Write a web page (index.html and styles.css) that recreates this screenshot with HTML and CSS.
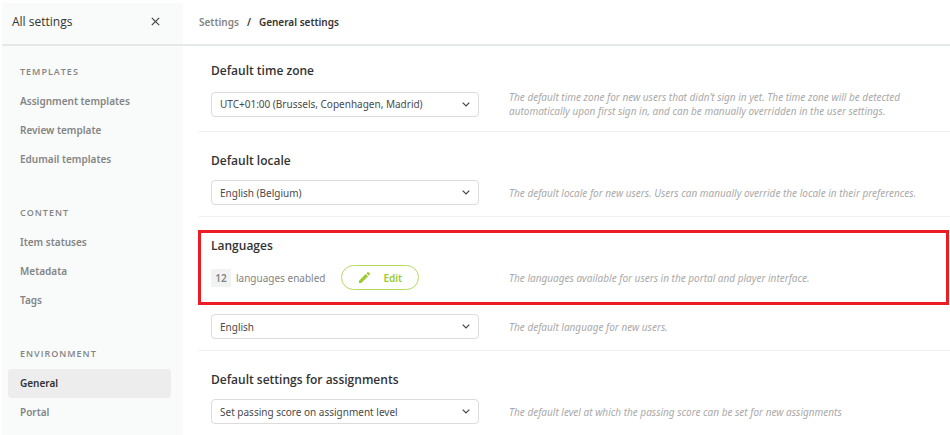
FILE: index.html
```
<!DOCTYPE html>
<html lang="en">

<head>
  <meta charset="UTF-8">
  <meta name="viewport" content="width=device-width, initial-scale=1.0">
  <title>General settings</title>
  <link rel="stylesheet" href="styles.css">
</head>

<body>

  <aside class="sidebar">
    <header class="sidebar-header">
      <span>All settings</span>
      <button class="close" type="button" aria-label="Close">
        <svg width="9" height="9" viewBox="0 0 9 9"><path d="M0.8 0.8L8.2 8.2M8.2 0.8L0.8 8.2" /></svg>
      </button>
    </header>

    <nav class="menu">
      <section class="menu-group">
        <h2>Templates</h2>
        <a href="#">Assignment templates</a>
        <a href="#">Review template</a>
        <a href="#">Edumail templates</a>
      </section>
      <section class="menu-group">
        <h2>Content</h2>
        <a href="#">Item statuses</a>
        <a href="#">Metadata</a>
        <a href="#">Tags</a>
      </section>
      <section class="menu-group">
        <h2>Environment</h2>
        <a href="#" class="active">General</a>
        <a href="#">Portal</a>
      </section>
    </nav>
  </aside>

  <main class="content">
    <header class="breadcrumb">
      <a href="#">Settings</a>
      <span>/</span>
      <span>General settings</span>
    </header>

    <div class="settings">
      <section class="setting">
        <h3><label for="timezone">Default time zone</label></h3>
        <div class="row">
          <div class="select">
            <select id="timezone">
              <option>UTC+01:00 (Brussels, Copenhagen, Madrid)</option>
            </select>
            <svg class="chevron" width="8" height="5" viewBox="0 0 8 5"><path d="M0.7 0.7L4 4L7.3 0.7" /></svg>
          </div>
          <p>The default time zone for new users that didn’t sign in yet. The time zone will be detected automatically upon first sign in, and can be manually overridden in the user settings.</p>
        </div>
      </section>

      <section class="setting">
        <h3><label for="locale">Default locale</label></h3>
        <div class="row">
          <div class="select">
            <select id="locale">
              <option>English (Belgium)</option>
            </select>
            <svg class="chevron" width="8" height="5" viewBox="0 0 8 5"><path d="M0.7 0.7L4 4L7.3 0.7" /></svg>
          </div>
          <p>The default locale for new users. Users can manually override the locale in their preferences.</p>
        </div>
      </section>

      <section class="setting languages">
        <div class="highlight">
          <h3>Languages</h3>
          <div class="row">
            <div class="enabled">
              <span class="count">12</span>
              <span>languages enabled</span>
              <button class="edit" type="button">
                <svg width="11" height="11" viewBox="3 3 18 18"><path d="M3 17.25V21h3.75L17.81 9.94l-3.75-3.75L3 17.25zM20.71 7.04a1 1 0 0 0 0-1.41l-2.34-2.34a1 1 0 0 0-1.41 0l-1.83 1.83 3.75 3.75 1.83-1.83z" /></svg>
                Edit
              </button>
            </div>
            <p>The languages available for users in the portal and player interface.</p>
          </div>
        </div>
        <div class="row">
          <div class="select">
            <select id="language" aria-label="Default language">
              <option>English</option>
            </select>
            <svg class="chevron" width="8" height="5" viewBox="0 0 8 5"><path d="M0.7 0.7L4 4L7.3 0.7" /></svg>
          </div>
          <p>The default language for new users.</p>
        </div>
      </section>

      <section class="setting">
        <h3><label for="assignments">Default settings for assignments</label></h3>
        <div class="row">
          <div class="select">
            <select id="assignments">
              <option>Set passing score on assignment level</option>
            </select>
            <svg class="chevron" width="8" height="5" viewBox="0 0 8 5"><path d="M0.7 0.7L4 4L7.3 0.7" /></svg>
          </div>
          <p>The default level at which the passing score can be set for new assignments</p>
        </div>
      </section>
    </div>
  </main>

</body>

</html>
```
FILE: styles.css
```
* {
  box-sizing: border-box;
}

body {
  display: flex;
  min-height: calc(100vh - 3px);
  margin: 3px 0 0 2px;
  font-family: "Noto Sans", "Open Sans", sans-serif;
  font-size: 10px;
  color: #333;
  background-color: #fff;
}

h2, h3, p {
  margin: 0;
}

a {
  color: #848484;
  text-decoration: none;
}

button, select {
  font-family: inherit;
  font-size: 10px;
  cursor: pointer;
}

/* sidebar */
.sidebar {
  flex: 0 0 181px;
  background-color: #f9fbfa;
}

.sidebar-header, .breadcrumb {
  display: flex;
  align-items: center;
  height: 43px;
  padding-bottom: 4px;
  border-bottom: 2px solid #e5e8e8;
}

.sidebar-header {
  justify-content: space-between;
  padding-left: 10px;
  padding-right: 23px;
  font-family: "Open Sans", sans-serif;
  font-size: 12px;
}

.close {
  display: flex;
  padding: 0;
  border: none;
  background: none;
}

.close svg, .chevron {
  fill: none;
  stroke: #444;
  stroke-width: 1.2;
}

.menu {
  display: flex;
  flex-direction: column;
  gap: 28px;
  padding: 15px 12px 0 6px;
}

.menu-group h2 {
  margin-bottom: 5px;
  padding-left: 12px;
  font-family: "Open Sans", sans-serif;
  font-size: 9px;
  font-weight: 600;
  line-height: 21px;
  letter-spacing: 1px;
  text-transform: uppercase;
  color: #848484;
}

.menu-group a {
  display: block;
  padding-left: 12px;
  font-weight: 600;
  line-height: 29px;
  border-radius: 4px;
}

.menu-group .active {
  color: #333;
  background-color: #ededed;
}

/* main content */
.content {
  flex: 1;
  min-width: 0;
}

.breadcrumb {
  gap: 8px;
  padding-left: 16px;
  font-weight: 600;
}

.settings {
  padding: 0 0 0 16px;
}

.setting {
  padding: 18px 12px 11px;
  border-bottom: 1px solid #f0f0f0;
}

.setting:first-child {
  padding-top: 14px;
  padding-bottom: 13px;
}

.setting:last-child {
  border-bottom: none;
}

.setting h3 {
  margin-bottom: 8px;
  font-family: "Open Sans", sans-serif;
  font-size: 12px;
  font-weight: 600;
  line-height: 22px;
}

.row {
  display: grid;
  grid-template-columns: 268px 1fr;
  column-gap: 30px;
  align-items: center;
}

.row p {
  font-style: italic;
  line-height: 14px;
  color: #aaa;
}

.select {
  position: relative;
}

.select select {
  display: block;
  width: 100%;
  height: 25px;
  padding: 0 24px 0 8px;
  border: 1px solid #dcdcdc;
  border-radius: 4px;
  color: #4a4a4a;
  background-color: #fff;
  appearance: none;
}

.chevron {
  position: absolute;
  top: 10px;
  right: 9px;
  pointer-events: none;
}

/* languages */
.languages {
  padding-top: 13px;
}

.highlight {
  margin: 0 -11px 9px -13px;
  padding: 2px 8px 12px 10px;
  border: 3px solid #ed1c24;
}

.enabled {
  display: flex;
  align-items: center;
  color: #848484;
}

.count {
  min-width: 20px;
  margin-right: 5px;
  font-weight: 600;
  line-height: 18px;
  text-align: center;
  background-color: #f1f3f3;
}

.edit {
  display: flex;
  align-items: center;
  gap: 13px;
  height: 25px;
  margin-left: 16px;
  padding: 0 16px 0 17px;
  border: 1px solid #b5da5f;
  border-radius: 13px;
  font-weight: 600;
  color: #9acb2f;
  background-color: #fff;
}

.edit svg {
  fill: #9acb2f;
}
```
